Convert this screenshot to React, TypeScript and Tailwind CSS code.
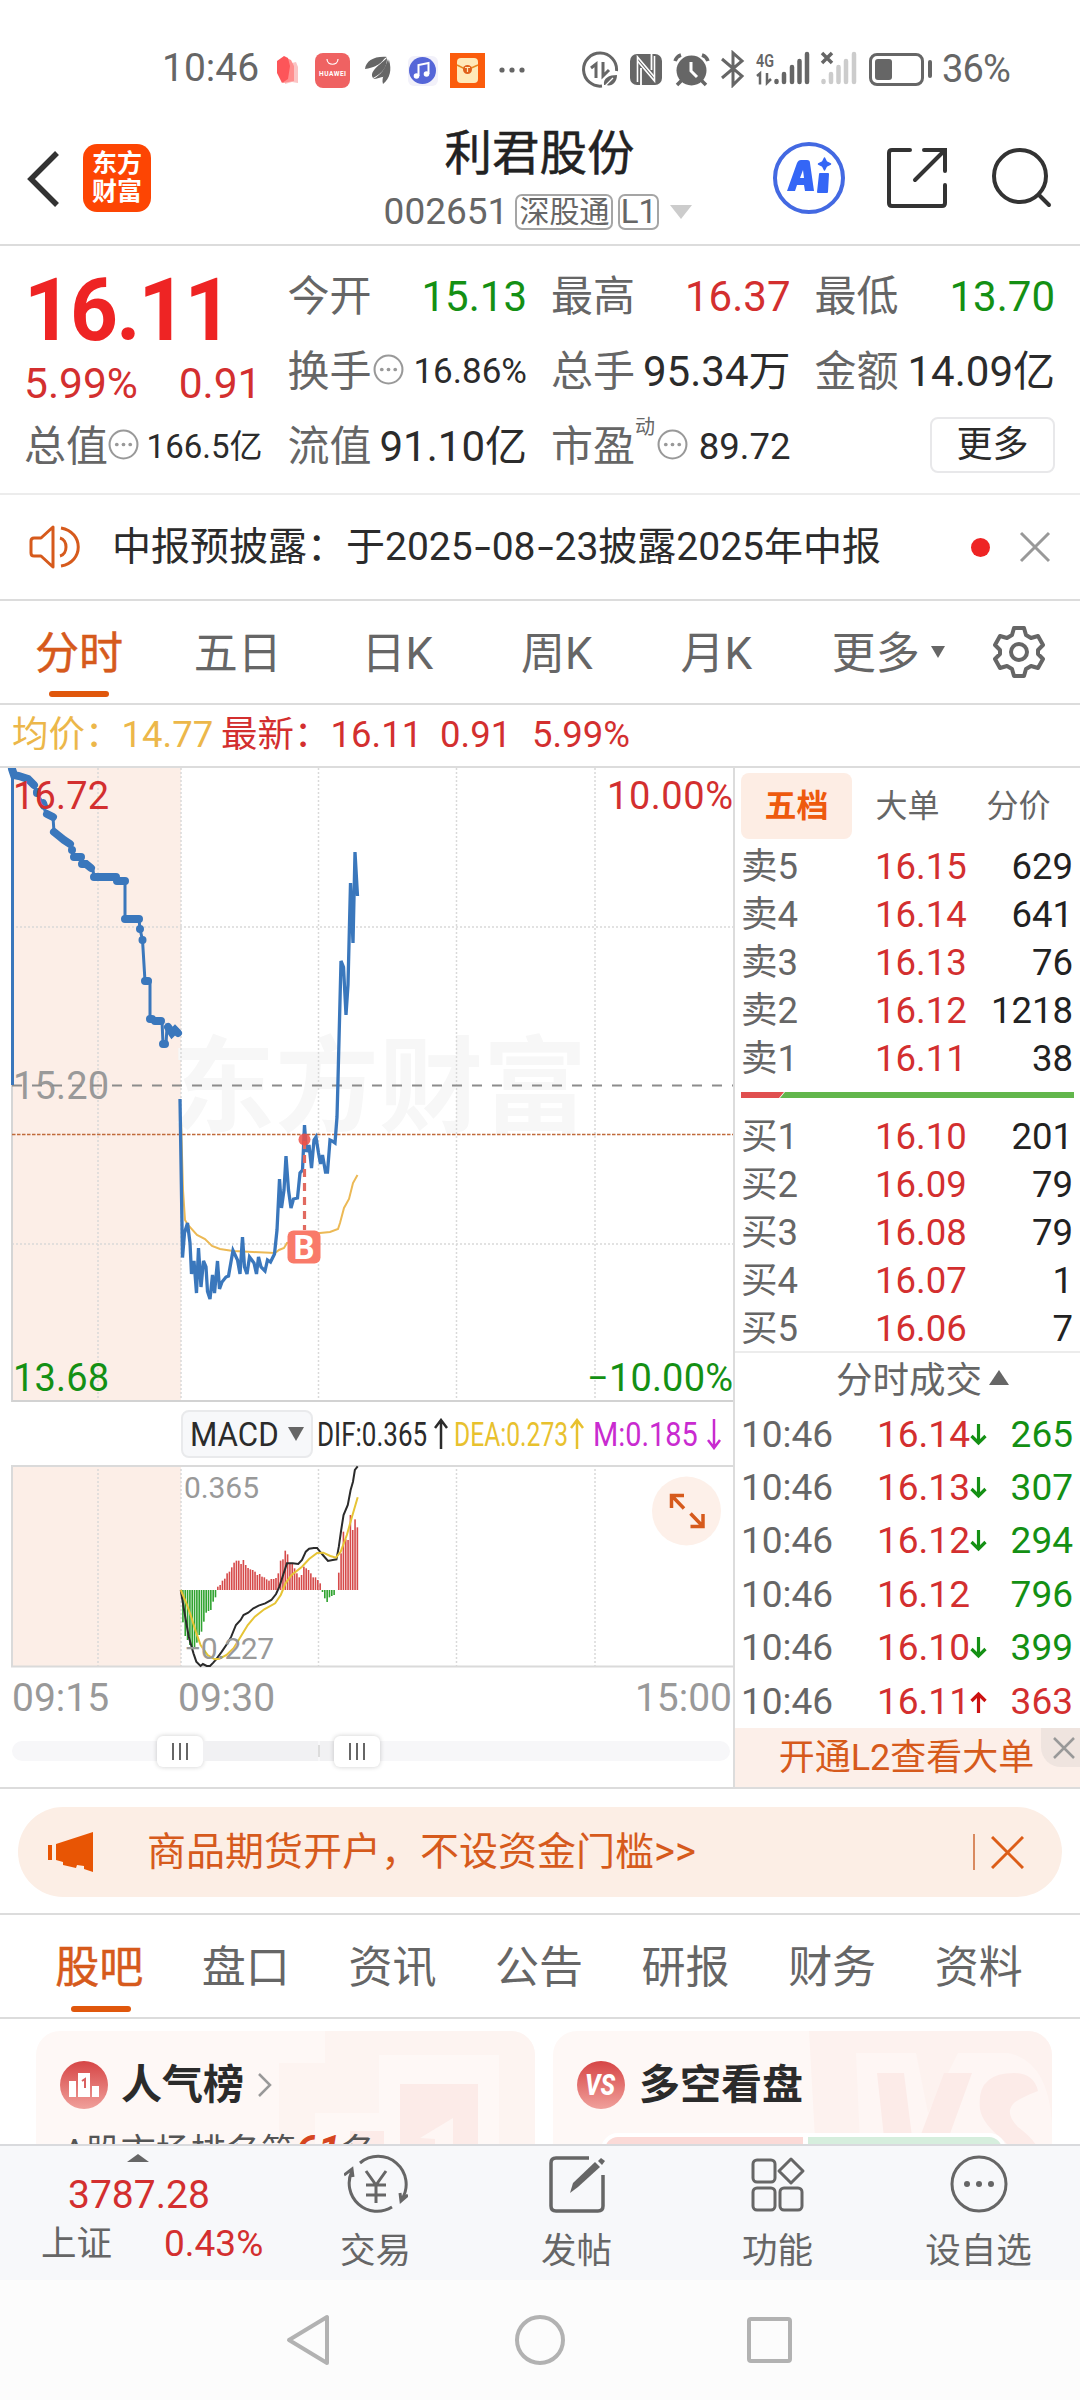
import type { ReactNode } from "react";

const quoteRed = "text-[#d32f2f]";
const quoteGreen = "text-[#149014]";

const asks = [
  ["卖5", "16.15", "629"],
  ["卖4", "16.14", "641"],
  ["卖3", "16.13", "76"],
  ["卖2", "16.12", "1218"],
  ["卖1", "16.11", "38"],
];

const bids = [
  ["买1", "16.10", "201"],
  ["买2", "16.09", "79"],
  ["买3", "16.08", "79"],
  ["买4", "16.07", "1"],
  ["买5", "16.06", "7"],
];

const deals = [
  { time: "10:46", price: "16.14", dir: "down", volume: "265" },
  { time: "10:46", price: "16.13", dir: "down", volume: "307" },
  { time: "10:46", price: "16.12", dir: "down", volume: "294" },
  { time: "10:46", price: "16.12", dir: "", volume: "796" },
  { time: "10:46", price: "16.10", dir: "down", volume: "399" },
  { time: "10:46", price: "16.11", dir: "up", volume: "363" },
];

const macdBars = [
  0, -97, -138, -150, -165, -172, -172, -158, -135, -125, -95, -68, -63, -60, -35, -22, 10, 15, 28,
  34, 50, 55, 68, 82, 88, 88, 78, 90, 75, 66, 62, 60, 55, 45, 48, 40, 38, 32, 28, 33, 33, 36, 50,
  88, 92, 118, 107, 80, 80, 65, 50, 38, 45, 70, 65, 60, 50, 38, 38, 30, 20, -6, -25, -36, -22, -18,
  -15, 0, 52, 110, 175, 152, 150, 225, 180, 212, 188,
];

const priceLine =
  "180,1099 182.5,1257.5 184.5,1233 187.5,1223 190,1243 191.5,1274 194,1261 196.5,1293 198.5,1248 201,1287 203.5,1261 206,1267 207.5,1291.5 210,1299 212.5,1275 214.5,1293 217.5,1261 219.5,1289 222,1282 226,1277 228.5,1276 233,1250.5 237.5,1260 240,1274 242.5,1237 244.5,1267 247,1274 249.5,1257 254,1263 256.5,1274 258.5,1257 261,1267 265,1271 267.5,1260 270.5,1262 274.5,1254 277,1230 279.5,1179 281.5,1208 284,1190 286,1156 288.5,1190 291,1208 293.5,1199 297.5,1198 300,1173 302.5,1170 304.5,1125 306.5,1152 309,1145 311.5,1168 314,1140 316,1137 318.5,1153 320.5,1164 322.5,1155 325.5,1172 327.5,1172 330,1140 332,1141 335,1143 337,1117 338,1080 341,961 343.5,967 346,1015 348,985 350.5,883 353,943 355,852 357.5,896";

const averageLine =
  "181,1120 183,1190 185,1220 188,1225 197,1235 205,1239 212,1246 220,1249 233,1251 253,1252 275,1253 279,1250 284,1248 287,1243 303,1241 312,1236 320,1233 330,1232 338,1229 340,1223 344,1208 349,1199 353,1183 357.5,1175";

const auctionLine =
  "M12.5 1085V768L14 775L19 776L28 779L34 785L37 793L43 804L46 814L53 817L54 832L59 836L64 840L70 844L72 850L73 857H81L82 864H86L91 868L93 870L94 877H116L117 881H125V919H139L140 929L142.5 940L145 981H150V1019H153L155 1021H162L163 1044H166L167 1027L171 1033L175 1030L178 1033";

const auctionDots =
  "M12 769L14 775L19 776L28 779L34 785M37 792V793M43 803L44 806M47 814L53 817M54 832V832L59 836L64 840L70 844M72 850V850M74 857H81M82 864H86L91 868M94 877H116M117 881H125M125 919H139M140 929V929M142.5 940V940M145 981H148M150 1019H152M155 1021H161M163 1044H165M168 1027L172 1033L175 1030L178 1033";

const difLine =
  "383,600 390,660 400,740 410,790 416,815 425,828 430,822 438,828 445,828 452,818 458,808 470,785 482,760 490,740 500,705 510,690 516,675 526,668 537,655 548,647 562,640 575,630 585,612 592,590 600,555 608,520 620,520 632,522 640,510 648,485 655,476 665,474 672,474 678,485 686,498 695,513 705,510 713,508 718,470 723,420 728,375 737,345 743,300 748,275 752,240 758,229";

const deaLine =
  "383,600 395,640 405,680 415,725 425,765 440,795 455,808 465,806 480,795 495,775 508,745 525,705 540,680 560,658 583,640 595,615 605,580 618,555 640,530 655,507 672,489 685,488 700,498 712,503 722,485 735,435 745,385 758,322";

const StatusBar = () => {
  return (
    <div className="flex h-[124px] items-end pb-[36px] pl-[162px] text-[#666]">
      <span className="w-[98px] text-[39px] leading-[39px]">10:46</span>
      <svg className="ml-[16px] h-[36px] w-[240px]" viewBox="276 50 240 36">
        <path d="M285 56l7 5 4-1 2 5v16l-6-1-7 2z" fill="#fbc4c4" />
        <path d="M284 55l7 3 3 6v15l-11 2z" fill="#ff8e8e" />
        <path d="M277 59l7-5 4 2 2 8-2 13-6 4-5-10z" fill="#fd5559" />
        <rect x="315" y="51" width="35" height="35" rx="8" fill="#ef6262" />
        <path d="M327 57c0 7 11 7 11 0" fill="none" stroke="#fff" strokeWidth="1.2" />
        <text x="332.5" y="73.5" textAnchor="middle" fontSize="6.6" fontWeight="700" fill="#fff" textLength="27">
          HUAWEI
        </text>
        <g fill="#666">
          <path d="M365 67c1-8 9-13 22-12-5 2-4 9-22 12z" />
          <path d="M373 76c-4-6 5-12 14-20 0 9-4 15-14 20z" />
          <path d="M373 77c8-4 12-10 15-20 2 8-1 15-5 18-2 0-6 2-10 2z" />
          <path d="M383 82c-2-7 3-12 6-24 3 10 1 18-6 24z" />
        </g>
        <rect x="408" y="54" width="30" height="30" rx="6" fill="#f2f1fa" />
        <circle cx="422.500" cy="68.500" r="13.500" fill="#5566d8" />
        <path d="M418.500 74v-11l10-2v11" fill="none" stroke="#fff" strokeWidth="2" />
        <circle cx="416.500" cy="74" r="2.800" fill="#fff" />
        <circle cx="426.500" cy="72" r="2.800" fill="#fff" />
        <rect x="450" y="51" width="35" height="35" fill="#fb5c0c" />
        <rect x="457" y="56" width="21" height="25" rx="4" fill="#ffe9b8" />
        <path d="M457 63l10 5 11-5" fill="none" stroke="#e8861d" strokeWidth="1.500" />
        <circle cx="467.500" cy="67.500" r="4.500" fill="#e0611b" />
        <path d="M465 65.500h5M467.500 65.500v4.500" stroke="#ffe9b8" strokeWidth="1.200" />
        <g fill="#666">
          <circle cx="502" cy="68" r="2.600" />
          <circle cx="512" cy="68" r="2.600" />
        </g>
      </svg>
      <svg className="h-[36px] w-[12px]" viewBox="516 50 12 36">
        <circle cx="522" cy="68" r="2.600" fill="#666" />
      </svg>
      <svg className="ml-[54px] h-[38px] w-[352px]" viewBox="582 49 352 38" fill="none" stroke="#666">
        <path d="M602 85A16.500 16.500 0 1 1 616.500 70" strokeWidth="3" />
        <path d="M591 67l5-4v14M603 61v14l6-6" strokeWidth="3" />
        <path d="M604 84c-1-7 5-10 13-10 0 7-5 12-11 10" fill="#666" stroke="none" />
        <path d="M604 86l9-9" stroke="#fff" strokeWidth="1.300" />
        <rect x="630" y="53" width="32" height="31" rx="7" fill="#666" stroke="none" />
        <path d="M637.500 81V56l17 20" stroke="#fff" strokeWidth="1.600" />
        <path d="M654.500 55v25l-17-20" stroke="#fff" strokeWidth="1.600" />
        <path d="M641 85V67M651.500 52v17" stroke="#fff" strokeWidth="1.800" />
        <circle cx="691.500" cy="69.500" r="15" fill="#666" stroke="none" />
        <path d="M691 61v9l6 6" stroke="#fff" strokeWidth="3" />
        <path d="M675 60c1-3 3-5 6-6M702 54c3 1 5 3 6 6" strokeWidth="3.500" />
        <path d="M682 79l-5 5M701 79l5 5" strokeWidth="3.500" />
        <path d="M722 58l20 17-9 9V52l9 8-20 17" strokeWidth="3" />
        <text x="756" y="66" fontSize="19" fontWeight="600" fill="#666" stroke="none" textLength="18" lengthAdjust="spacingAndGlyphs">
          4G
        </text>
        <path d="M757 75l3-2.500v11M767 72v10l4-4" strokeWidth="2.500" />
        <g strokeWidth="4.500" strokeLinecap="round">
          <path d="M776.500 80v1M784 73v8M792 66v15M799.500 60v21M807 53v28" />
          <path d="M823.500 80v1M831 73v8M838.500 66v15M846 60v21M854 53v28" stroke="#ccc" />
        </g>
        <path d="M822 52l10 10M832 52l-10 10" strokeWidth="3.500" />
        <rect x="870.500" y="53.500" width="52" height="30" rx="6.500" strokeWidth="3" />
        <rect x="875" y="58" width="17" height="21" rx="3" fill="#666" stroke="none" />
        <path d="M930 61v14" strokeWidth="4" strokeLinecap="round" />
      </svg>
      <span className="ml-[8px] text-[38px] leading-[37px] tracking-[-0.800px]">36%</span>
    </div>
  );
};

const Header = () => {
  return (
    <header className="flex h-[122px] items-center border-b-2 border-[#dcdcdc]">
      <svg className="mt-[-13px] ml-[26px] h-[60px] w-[36px]" viewBox="0 0 36 60" fill="none" stroke="#333" strokeWidth="5.500">
        <path d="M31 5L5 31L31 57" />
      </svg>
      <div className="mt-[-12px] ml-[21px] flex size-[68px] flex-col items-center justify-center rounded-[14px] bg-[#fd4503] text-[25px] leading-[28px] font-bold text-white">
        <span>东方</span>
        <span>财富</span>
      </div>
      <div className="ml-[201px] flex h-full w-[375px] flex-col items-center">
        <h1 className="mt-[1px] text-[47.500px] leading-[58px] font-normal text-[#222] [-webkit-text-stroke:0.500px_#222]">
          利君股份
        </h1>
        <div className="mt-[10px] flex items-center text-[37px] leading-[38px] text-[#666]">
          <span className="mr-[7px] ml-[-2px]">002651</span>
          <span className="rounded-[7px] border-2 border-[#a5a5a5] px-[2px] text-[30px] leading-[32px]">深股通</span>
          <span className="ml-[5px] w-[41px] rounded-[7px] border-2 border-[#a5a5a5] text-center text-[33px] leading-[32px]">
            L1
          </span>
          <svg className="ml-[10px] h-[16px] w-[24px]" viewBox="0 0 24 16">
            <path d="M1 1h22L12 15z" fill="#ccc" />
          </svg>
        </div>
      </div>
      <svg className="mt-[-12px] ml-[45px] size-[74px]" viewBox="0 0 74 74">
        <circle cx="37" cy="37" r="34" fill="none" stroke="#4369e2" strokeWidth="4" />
        <path
          d="M15 50l10-28c1-2 2-3 4-3h6c2 0 3 1 3 3l4 28h-9l-1-6h-7l-2 6zM28 37h4l-1-8z"
          fill="#3466f6"
          fillRule="evenodd"
        />
        <path d="M48 33h8l-1 18h-9z" fill="#3466f6" stroke="#3466f6" strokeLinejoin="round" strokeWidth="2" />
        <path d="M52.500 17l2 4 4 2-4 2-2 4-2-4-4-2 4-2z" fill="#3466f6" stroke="#3466f6" strokeLinejoin="round" strokeWidth="1.500" />
      </svg>
      <svg className="mt-[-12px] ml-[40px] size-[62px]" viewBox="0 0 62 62" fill="none" stroke="#333" strokeWidth="4" strokeLinecap="round">
        <path d="M24 3H6q-3 0-3 3v50q0 3 3 3h50q3 0 3-3V38M38 3h21v21M59 3L29 33" />
      </svg>
      <svg className="mt-[-12px] ml-[42px] size-[64px]" viewBox="0 0 64 64" fill="none" stroke="#333" strokeWidth="4" strokeLinecap="round">
        <circle cx="30" cy="30" r="26" />
        <path d="M49 49l10 10" />
      </svg>
    </header>
  );
};

const InfoDots = ({ className = "" }: { className?: string }) => {
  return (
    <svg className={`mt-[-5px] size-[31px] shrink-0 ${className}`} viewBox="0 0 30 30">
      <circle cx="15" cy="15" r="13.500" fill="none" stroke="#999" strokeWidth="2" />
      <circle cx="8.500" cy="15" r="1.800" fill="#999" />
      <circle cx="15" cy="15" r="1.800" fill="#999" />
      <circle cx="21.500" cy="15" r="1.800" fill="#999" />
    </svg>
  );
};

const Field = ({ label, children }: { label: string; children: ReactNode }) => {
  return (
    <div className="flex h-[75px] items-center">
      <span className="text-[#666]">{label}</span>
      {children}
    </div>
  );
};

const Quote = () => {
  return (
    <section className="flex h-[249px] border-b-2 border-[#ececec] pt-[13px] pr-[25px] pl-[24px] text-[42px] leading-[48px] whitespace-nowrap text-[#2b2b2b]">
      <div className="w-[239px]">
        <div className="h-[100px] pt-[1px] text-[88px] leading-[100px] font-bold tracking-[-2px] text-[#ee2424]">
          <span className="inline-block origin-left scale-x-95">16.11</span>
        </div>
        <div className={`flex h-[50px] items-center justify-between pr-[1px] text-[42.500px] ${quoteRed}`}>
          <span>5.99%</span>
          <span>0.91</span>
        </div>
        <Field label="总值">
          <InfoDots />
          <span className="ml-auto text-[33px]">166.5亿</span>
        </Field>
      </div>
      <div className="ml-[25px] w-[240px]">
        <Field label="今开">
          <span className={`ml-auto ${quoteGreen}`}>15.13</span>
        </Field>
        <Field label="换手">
          <InfoDots className="ml-[1px]" />
          <span className="ml-auto text-[35px]">16.86%</span>
        </Field>
        <Field label="流值">
          <span className="ml-auto">91.10亿</span>
        </Field>
      </div>
      <div className="ml-[24px] w-[240px]">
        <Field label="最高">
          <span className={`ml-auto ${quoteRed}`}>16.37</span>
        </Field>
        <Field label="总手">
          <span className="ml-auto">95.34万</span>
        </Field>
        <Field label="市盈">
          <span className="mt-[-40px] text-[20px] leading-[24px] text-[#666]">动</span>
          <InfoDots className="ml-[2px]" />
          <span className="ml-auto text-[36.500px]">89.72</span>
        </Field>
      </div>
      <div className="ml-[24px] w-[241px]">
        <Field label="最低">
          <span className={`ml-auto ${quoteGreen}`}>13.70</span>
        </Field>
        <Field label="金额">
          <span className="ml-auto">14.09亿</span>
        </Field>
        <div className="mt-[8px] ml-auto flex h-[56px] w-[125px] items-center justify-center rounded-[8px] border-2 border-[#e8e8ea] text-[36px]">
          更多
        </div>
      </div>
    </section>
  );
};

const Hyphen = () => <span className="inline-block w-[19px] scale-x-150 text-center">-</span>;

const Notice = () => {
  return (
    <div className="flex h-[106px] items-center border-b-2 border-[#dcdcdc] pl-[28px] text-[39px] leading-[48px] text-[#2b2b2b]">
      <svg className="h-[46px] w-[54px]" viewBox="0 0 54 46" fill="none" stroke="#d65a1c" strokeWidth="3">
        <path d="M3 17q0-3 3-3h7L25 3v40L13 32H6q-3 0-3-3z" strokeLinejoin="round" />
        <path d="M32 14c8 2 8 16 0 18M33 4c23 4 23 34 0 38" />
      </svg>
      <span className="ml-[30px] w-[770px] whitespace-nowrap">
        中报预披露：于2025
        <Hyphen />
        08
        <Hyphen />
        23披露2025年中报
      </span>
      <div className="ml-[89px] size-[19px] rounded-full bg-[#ee2424]" />
      <svg className="ml-[29px] size-[32px]" viewBox="0 0 32 32" stroke="#999" strokeWidth="3">
        <path d="M2 2l28 28M30 2L2 30" />
      </svg>
    </div>
  );
};

const ChartTabs = () => {
  return (
    <nav className="flex h-[104px] items-stretch border-b-2 border-[#dcdcdc] text-[44px] leading-[107px] text-[#666]">
      <div className="relative w-[158px] text-center text-[#d65a1c] [-webkit-text-stroke:0.500px_#d65a1c]">
        分时
        <div className="absolute bottom-[6px] left-[49px] h-[6px] w-[60px] rounded-full bg-[#e0570c]" />
      </div>
      <div className="w-[159.500px] text-center">五日</div>
      <div className="w-[159.500px] text-center">日K</div>
      <div className="w-[159.500px] text-center">周K</div>
      <div className="w-[159.500px] text-center">月K</div>
      <div className="w-[159.500px] text-center">更多</div>
      <svg className="ml-[-27px] h-[14px] w-[18px] self-center" viewBox="0 0 18 14">
        <path d="M2 1h14L9 13z" fill="#666" />
      </svg>
      <svg className="ml-[45px] size-[54px] self-center" viewBox="0 0 54 54" fill="none" stroke="#666" strokeWidth="4" strokeLinejoin="round">
        <path d="M22 3h10l2 7 5 3 7-2 5 9-5 5v4l5 5-5 9-7-2-5 3-2 7H22l-2-7-5-3-7 2-5-9 5-5v-4l-5-5 5-9 7 2 5-3z" />
        <circle cx="27" cy="27" r="8" />
      </svg>
    </nav>
  );
};

const Legend = () => {
  return (
    <div className="flex h-[63px] items-center border-b-2 border-[#dcdcdc] pl-[12px] text-[36.500px] text-[#d32f2f]">
      <span className="w-[209px] text-[#ecb74a]">均价：14.77</span>
      <span className="w-[219px]">最新：16.11</span>
      <span className="w-[92px]">0.91</span>
      <span>5.99%</span>
    </div>
  );
};

const Arrow = ({ className, up }: { className: string; up?: boolean }) => {
  return (
    <svg className={className} viewBox="0 0 16 32" fill="none" stroke="currentColor" strokeWidth="2.500">
      <path d={up ? "M8 31V3M2 10l6-8 6 8" : "M8 1v28M2 22l6 8 6-8"} />
    </svg>
  );
};

const MainChart = () => {
  return (
    <svg className="block h-[634px] w-[733px]" viewBox="0 768 733 634">
      <rect x="12" y="768" width="169" height="634" fill="#fceee7" />
      <text x="171" y="1124" fontSize="104" fontWeight="700" fill="#f7f7f7" textLength="416">
        东方财富
      </text>
      <g stroke="#d9d9d9" strokeWidth="1.500" strokeDasharray="2 2">
        <path d="M98 768V1402M181 768V1402M318.500 768V1402M456.500 768V1402M595 768V1402" />
        <path d="M12 927H733M12 1244H733" />
      </g>
      <path d="M12 1085V1402" stroke="#d5d5d5" strokeWidth="2" />
      <path d="M12 1401H733" stroke="#d2d2d2" strokeWidth="2" />
      <g fontSize="38">
        <text x="13" y="1099" fill="#999" textLength="96">15.20</text>
        <text x="13" y="1391" fill="#149014" textLength="96">13.68</text>
        <text x="587" y="1391" fill="#149014" textLength="146">−10.00%</text>
      </g>
      <path d="M12 1085.500H733" stroke="#8c8c8c" strokeWidth="2" strokeDasharray="10 10" />
      <path d="M12 1134.500H733" stroke="#c06a3a" strokeWidth="1.500" strokeDasharray="3.500 1.500" />
      <polyline points={averageLine} fill="none" stroke="#ecb955" strokeWidth="2" />
      <g fill="none" stroke="#3a77bc">
        <path d={auctionLine} strokeWidth="3" />
        <path d={auctionDots} strokeWidth="8" strokeLinecap="round" />
        <polyline points={priceLine} strokeWidth="3.300" />
      </g>
      <g fontSize="38" fill="#d32f2f">
        <text x="13" y="809" textLength="96">16.72</text>
        <text x="607" y="809" textLength="126">10.00%</text>
      </g>
      <path d="M304.500 1141V1230" stroke="#e16a60" strokeWidth="3.200" strokeDasharray="8 6" />
      <circle cx="304.500" cy="1139.500" r="6" fill="#ee4f45" fillOpacity=".85" />
      <rect x="287.500" y="1230.500" width="33" height="33" rx="6" fill="#f97a69" />
      <text x="304" y="1258.500" textAnchor="middle" fontSize="33" fontWeight="700" fill="#fff">
        B
      </text>
    </svg>
  );
};

const IndicatorRow = () => {
  return (
    <div className="flex h-[63px] items-center pl-[181px] text-[34px] leading-[40px] whitespace-nowrap text-[#2b2b2b]">
      <div className="flex h-[48px] w-[132px] items-center rounded-[8px] border-2 border-[#e9eaec] bg-[#f7f8fa] pl-[7px]">
        <div className="w-[98px]">
          <span className="inline-block origin-left scale-x-[0.92]">MACD</span>
        </div>
        <svg className="h-[14px] w-[16px] shrink-0" viewBox="0 0 16 14">
          <path d="M0 0h16L8 14z" fill="#666" />
        </svg>
      </div>
      <div className="ml-[4px] w-[116px]">
        <span className="inline-block origin-left scale-x-[0.765]">DIF:0.365</span>
      </div>
      <Arrow className="h-[32px] w-[16px]" up />
      <div className="ml-[5px] flex w-[139px] items-center text-[#e8c12e]">
        <div className="w-[115px]">
          <span className="inline-block origin-left scale-x-[0.725]">DEA:0.273</span>
        </div>
        <Arrow className="h-[32px] w-[16px]" up />
      </div>
      <div className="flex items-center text-[#c92bd0]">
        <div className="w-[113px]">
          <span className="inline-block origin-left scale-x-[0.85]">M:0.185</span>
        </div>
        <Arrow className="h-[32px] w-[16px]" />
      </div>
    </div>
  );
};

const MacdChart = () => {
  return (
    <svg className="block h-[203px] w-[733px]" viewBox="0 1465 733 203">
      <rect x="12" y="1465" width="169" height="202" fill="#fceee7" />
      <path
        d="M98 1465V1667M181 1465V1667M318.500 1465V1667M456.500 1465V1667M595 1465V1667"
        stroke="#d9d9d9"
        strokeWidth="1.500"
        strokeDasharray="2 2"
      />
      <path d="M733 1466H12V1666.500H733" fill="none" stroke="#dadada" strokeWidth="2" />
      {macdBars.map((value, i) => (
        <rect
          key={i}
          x={180.600 + i * 2.326 - 0.8}
          y={value > 0 ? 1590 - value / 3 : 1590}
          width="1.600"
          height={Math.abs(value) / 3}
          fill={value > 0 ? "#d64a4a" : "#2fa32f"}
        />
      ))}
      <g transform="translate(0 1390) scale(0.4719 0.33333)" fill="none" strokeWidth="2">
        <polyline points={difLine} stroke="#2b2b2b" vectorEffect="non-scaling-stroke" />
        <polyline points={deaLine} stroke="#e6c435" vectorEffect="non-scaling-stroke" />
      </g>
      <g fontSize="30" fill="#999">
        <text x="184" y="1498" textLength="75">0.365</text>
        <text x="184" y="1659" textLength="90">−0.227</text>
      </g>
      <circle cx="686.500" cy="1511" r="34.500" fill="#fdf0e9" />
      <path d="M671.500 1508v-12.500H684M672 1496l12 12.500M703 1514v12.500H690.500M702.500 1526l-12-12.500" fill="none" stroke="#d65a1c" strokeWidth="3.500" />
    </svg>
  );
};

const Grip = () => {
  return (
    <div className="flex h-[31px] w-[46px] items-center justify-center gap-[5px] rounded-[6px] bg-white shadow-[0_0_5px_rgba(0,0,0,0.2)]">
      <div className="h-[17px] w-[2px] bg-[#666]" />
      <div className="h-[17px] w-[2px] bg-[#666]" />
      <div className="h-[17px] w-[2px] bg-[#666]" />
    </div>
  );
};

const TimeAxis = () => {
  return (
    <div className="pl-[12px]">
      <div className="flex h-[60px] items-center text-[39px] leading-[60px] text-[#999]">
        <span className="w-[166px]">09:15</span>
        <span>09:30</span>
        <span className="mr-[1px] ml-auto">15:00</span>
      </div>
      <div className="mt-[13px] mr-[3px] flex h-[20px] items-center rounded-full bg-[#f7f7f9] pl-[145px]">
        <Grip />
        <div className="h-full w-[115px] bg-[#f1f1f3]" />
        <div className="h-[12px] w-[2px] bg-[#dcdcdc]" />
        <div className="h-full w-[14px] bg-[#f1f1f3]" />
        <Grip />
      </div>
    </div>
  );
};

const OrderRow = ({ row }: { row: string[] }) => {
  return (
    <div className="flex h-[48px] items-center">
      <span className="w-[134px] text-[#666]">{row[0]}</span>
      <span className={quoteRed}>{row[1]}</span>
      <span className="ml-auto">{row[2]}</span>
    </div>
  );
};

const OrderBook = () => {
  return (
    <aside className="w-[347px] border-l-2 border-[#dcdcdc] text-[36.500px] leading-[48px] text-[#222]">
      <div className="flex h-[74px] items-center pt-[2px] pl-[6px] text-[32px] text-[#666]">
        <div className="h-[66px] w-[111px] rounded-[8px] bg-[#fdede4] text-center leading-[67px] font-bold text-[#ee5a0e]">五档</div>
        <div className="w-[111px] text-center">大单</div>
        <div className="w-[111px] text-center">分价</div>
      </div>
      <div className="pt-[1px] pr-[7px] pl-[6px]">
        {asks.map((row) => (
          <OrderRow key={row[0]} row={row} />
        ))}
        <svg className="mt-[9px] mb-[15px] block h-[6px] w-[333px]" viewBox="0 0 333 6">
          <path d="M0 0h43l-5 6H0z" fill="#e04f4f" />
          <path d="M44 0h289v6H39z" fill="#62b64c" />
        </svg>
        {bids.map((row) => (
          <OrderRow key={row[0]} row={row} />
        ))}
      </div>
      <div className="mt-[-2px] flex h-[57px] items-center border-t-2 border-[#ececec] pl-[101px] text-[#666]">
        分时成交
        <svg className="mt-[-6px] ml-[7px] h-[15px] w-[20px]" viewBox="0 0 20 15">
          <path d="M10 0L20 15H0z" fill="#666" />
        </svg>
      </div>
      <div className="h-[320px] pr-[7px] pl-[6px] text-[37px]">
        {deals.map((deal, i) => (
          <div key={i} className="flex h-[53.400px] items-center">
            <span className="w-[136px] text-[#666]">{deal.time}</span>
            <span className={`w-[93px] ${quoteRed}`}>{deal.price}</span>
            {deal.dir !== "" && (
              <svg
                className={`h-[22px] w-[17px] ${deal.dir === "up" ? "text-[#cc1111]" : "text-[#149014]"}`}
                viewBox="0 0 17 22"
                fill="none"
                stroke="currentColor"
                strokeWidth="3.200"
              >
                <path d={deal.dir === "up" ? "M8.500 22V3M1.500 10l7-7 7 7" : "M8.500 0v19M1.500 12l7 7 7-7"} />
              </svg>
            )}
            <span className={`ml-auto ${deal.dir === "up" ? quoteRed : quoteGreen}`}>{deal.volume}</span>
          </div>
        ))}
      </div>
      <div className="relative h-[59px] bg-[#fcefe9] pr-[2px] text-center text-[36px] leading-[60px] text-[#d65a1c]">
        开通L2查看大单
        <div className="absolute top-0 right-0 flex h-[39px] w-[39px] items-center justify-center rounded-bl-[20px] bg-[#efe4df] pl-[6px]">
          <svg className="size-[22px]" viewBox="0 0 22 22" stroke="#999" strokeWidth="2.500">
            <path d="M1 1l20 20M21 1L1 21" />
          </svg>
        </div>
      </div>
    </aside>
  );
};

const Banner = () => {
  return (
    <div className="h-[128px] border-t-2 border-b-2 border-[#dcdcdc] px-[18px] pt-[18px]">
      <div className="flex h-[90px] items-center rounded-full bg-[#fceee5] pl-[30px] text-[39px] text-[#d65a1c]">
        <svg className="h-[40px] w-[46px]" viewBox="0 0 46 40" fill="#e85504">
          <path d="M0 13h4v15H0zM8 12L45 0v40l-9-3v-3l-7-1-1 3-13-3v-3l-7-2z" />
        </svg>
        <span className="ml-[53px] whitespace-nowrap">
          商品期货开户，不设资金门槛<span className="text-[40px]">&gt;&gt;</span>
        </span>
        <div className="ml-auto h-[36px] w-[2px] bg-[#d98a60]" />
        <svg className="mr-[38px] ml-[16px] size-[33px]" viewBox="0 0 33 33" stroke="#dc5d18" strokeWidth="3">
          <path d="M1 1l31 31M32 1L1 32" />
        </svg>
      </div>
    </div>
  );
};

const SectionTabs = () => {
  return (
    <nav className="grid h-[104px] grid-cols-7 border-b-2 border-[#dcdcdc] pr-[28px] pl-[26px] text-center text-[44px] leading-[106px] text-[#666]">
      <div className="relative text-[#d65a1c] [-webkit-text-stroke:0.500px_#d65a1c]">
        股吧
        <div className="absolute bottom-[9px] left-[45px] h-[6px] w-[60px] rounded-full bg-[#e0570c]" />
      </div>
      <div>盘口</div>
      <div>资讯</div>
      <div>公告</div>
      <div>研报</div>
      <div>财务</div>
      <div>资料</div>
    </nav>
  );
};

const Cards = () => {
  return (
    <div className="flex h-[125px] gap-[18px] overflow-hidden pt-[12px] pl-[36px] text-[41px] leading-[48px] font-bold text-[#2b2b2b]">
      <div className="relative h-[180px] w-[499px] shrink-0 overflow-hidden rounded-[24px] bg-[#fef8f6]">
        <svg className="absolute top-0 left-0 h-[180px] w-[499px]" viewBox="0 0 499 180">
          <path d="M243 32h46V0h210v180H243z" fill="#fdf4f1" />
          <path d="M279 82h64V24h120v156H279z" fill="#fef8f6" />
          <path d="M364 53h78v127H364zM314 100h34v80h-34z" fill="#fcebe8" />
          <path d="M384 107l33-20v93h-18v-72z" fill="#fef6f4" />
        </svg>
        <div className="relative mt-[30px] flex items-center pl-[24px]">
          <svg className="size-[48px]" viewBox="0 0 48 48">
            <defs>
              <linearGradient id="badge" x1="0" y1="0" x2="0" y2="1">
                <stop offset="0" stopColor="#d64545" />
                <stop offset="1" stopColor="#f0a09b" />
              </linearGradient>
            </defs>
            <circle cx="24" cy="24" r="24" fill="url(#badge)" />
            <path d="M9 20h7v16H9zM18 12h12v24H18zM32 25h7v11h-7z" fill="#fff" />
            <path d="M22 20l3-2v9" fill="none" stroke="#d96060" strokeWidth="2" />
          </svg>
          <span className="ml-[13px]">人气榜</span>
          <svg className="ml-[14px] h-[24px] w-[14px]" viewBox="0 0 14 24" fill="none" stroke="#999" strokeWidth="2.500">
            <path d="M1 1l11 11L1 23" />
          </svg>
        </div>
        <div className="relative mt-[20px] pl-[27px] text-[35px] font-normal whitespace-nowrap text-[#555]">
          A股市场排名第<span className="text-[40px] leading-none font-bold text-[#d64520] italic">61</span>名
        </div>
      </div>
      <div className="relative h-[180px] w-[499px] shrink-0 overflow-hidden rounded-[24px] bg-[#fef8f6]">
        <svg className="absolute top-0 left-0 h-[180px] w-[499px]" viewBox="0 0 499 180">
          <path d="M256 0h243v180H266z" fill="#fdf2ef" />
          <path d="M303 22h60l12 60 30-60h50q40 8 44 70v88H310z" fill="#fef6f4" />
          <path d="M324 42h27l10 80 30-80h28l-50 138h-30zM485 60q-4-18-24-18-38 0-34 36 2 14 22 30 14 12 10 28l-24 44h36q26-34 14-62-4-10-20-22-14-14-4-24 8-6 24-12z" fill="#fcebe8" />
        </svg>
        <div className="relative mt-[30px] flex items-center pl-[24px]">
          <svg className="size-[48px]" viewBox="0 0 48 48">
            <circle cx="24" cy="24" r="24" fill="url(#badge)" />
            <text x="23" y="34" textAnchor="middle" fontSize="29" fontStyle="italic" fontWeight="800" fill="#fff" textLength="30" lengthAdjust="spacingAndGlyphs">
              VS
            </text>
          </svg>
          <span className="ml-[14px]">多空看盘</span>
        </div>
        <div className="relative mt-[24px] ml-[48px] flex h-[34px] w-[405px] gap-[5px] overflow-hidden rounded-full border-4 border-white bg-white">
          <div className="w-[198px] bg-[#fbdad7]" />
          <div className="flex-1 bg-[#d6eedd]" />
        </div>
      </div>
    </div>
  );
};

const BarItem = ({ label, children }: { label: string; children: ReactNode }) => {
  return (
    <div className="flex w-[201px] flex-col items-center">
      <svg className="mt-[7px] size-[64px]" viewBox="0 0 64 64" fill="none" stroke="#666" strokeWidth="3">
        {children}
      </svg>
      <span className="mt-[12px] text-[35.500px] leading-[44px]">{label}</span>
    </div>
  );
};

const BottomBar = () => {
  return (
    <footer className="flex h-[136px] border-t-2 border-[#d9dadd] bg-[#f7f8fa] text-[#666]">
      <div className="w-[275px]">
        <svg className="mt-[8px] ml-[127px] h-[8px] w-[22px]" viewBox="0 0 22 8">
          <path d="M11 0l11 8H0z" fill="#666" />
        </svg>
        <div className={`mt-[9px] pl-[68px] text-[39px] leading-[48px] ${quoteRed}`}>3787.28</div>
        <div className="flex items-center pl-[41px] text-[35.500px] leading-[50px]">
          上证
          <span className={`ml-[52px] text-[37px] ${quoteRed}`}>0.43%</span>
        </div>
      </div>
      <BarItem label="交易">
        <path d="M16 10A28 28 0 0 1 58 46M48 54A28 28 0 0 1 8 18M0 22l8-6 1 8M64 42l-7 6-1-8" />
        <path d="M22 18l10 14 10-14M22 32h20M22 42h20M32 32v18" />
      </BarItem>
      <BarItem label="发帖">
        <path d="M44 5H11q-5 0-5 5v43q0 5 5 5h42q5 0 5-5V22" strokeWidth="3.500" />
        <path d="M25 40l3-10L50 9l5 5L33 34z" fill="#666" stroke="none" />
        <path d="M53 8l3-3 4 3-3 4z" fill="#666" stroke="none" />
      </BarItem>
      <BarItem label="功能">
        <rect x="7" y="7" width="22" height="22" rx="4" />
        <path d="M45 6l12 12-12 12-12-12z" strokeLinejoin="round" />
        <rect x="7" y="35" width="22" height="22" rx="4" />
        <rect x="34" y="35" width="22" height="22" rx="4" />
      </BarItem>
      <BarItem label="设自选">
        <circle cx="32" cy="31" r="27" />
        <g fill="#666" stroke="none">
          <circle cx="20" cy="31" r="3" />
          <circle cx="32" cy="31" r="3" />
          <circle cx="44" cy="31" r="3" />
        </g>
      </BarItem>
    </footer>
  );
};

const SystemNav = () => {
  return (
    <div className="flex h-[120px] items-center bg-[#fcfcfc]">
      <svg className="ml-[283px] size-[54px]" viewBox="0 0 54 54" fill="none" stroke="#b2b2b2" strokeWidth="4" strokeLinejoin="round">
        <path d="M44 4v46L6 27z" />
      </svg>
      <svg className="ml-[176px] size-[54px]" viewBox="0 0 54 54" fill="none" stroke="#b2b2b2" strokeWidth="4">
        <circle cx="27" cy="27" r="23" />
      </svg>
      <svg className="ml-[175px] size-[54px]" viewBox="0 0 54 54" fill="none" stroke="#b2b2b2" strokeWidth="4">
        <rect x="7" y="6" width="41" height="42" rx="2" />
      </svg>
    </div>
  );
};

const App = () => {
  return (
    <div className="h-[2400px] w-[1080px] overflow-hidden bg-white font-['Roboto','Noto_Sans_CJK_SC',sans-serif]">
      <StatusBar />
      <Header />
      <Quote />
      <Notice />
      <ChartTabs />
      <Legend />
      <div className="flex h-[1019px]">
        <div className="w-[733px]">
          <MainChart />
          <IndicatorRow />
          <MacdChart />
          <TimeAxis />
        </div>
        <OrderBook />
      </div>
      <Banner />
      <SectionTabs />
      <Cards />
      <BottomBar />
      <SystemNav />
    </div>
  );
};

export default App;
